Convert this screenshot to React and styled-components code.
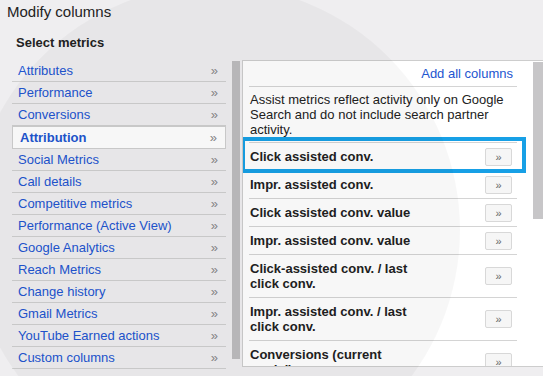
import React from "react";
import styled, { createGlobalStyle } from "styled-components";

const categories = [
  "Attributes",
  "Performance",
  "Conversions",
  "Attribution",
  "Social Metrics",
  "Call details",
  "Competitive metrics",
  "Performance (Active View)",
  "Google Analytics",
  "Reach Metrics",
  "Change history",
  "Gmail Metrics",
  "YouTube Earned actions",
  "Custom columns",
];

const metrics = [
  { name: "Click assisted conv.", marked: true },
  { name: "Impr. assisted conv." },
  { name: "Click assisted conv. value" },
  { name: "Impr. assisted conv. value" },
  { name: "Click-assisted conv. / last click conv." },
  { name: "Impr. assisted conv. / last click conv." },
  { name: "Conversions (current model)" },
];

const App = () => {
  return (
    <Page>
      <GlobalStyle />
      <Title>Modify columns</Title>
      <Subtitle>Select metrics</Subtitle>
      <Columns>
        <List>
          {categories.map((c) => (
            <Item key={c} active={c === "Attribution"}>
              <span>{c}</span>
              <Chevron>»</Chevron>
            </Item>
          ))}
        </List>
        <LeftScroll />
        <Panel>
          <PanelBody>
            <AddRow>
              <AddLink>Add all columns</AddLink>
            </AddRow>
            <Note>
              Assist metrics reflect activity only on Google Search and do not
              include search partner activity.
            </Note>
            {metrics.map((m) => (
              <Metric key={m.name}>
                <MetricName>{m.name}</MetricName>
                <AddButton>»</AddButton>
                {m.marked && <Highlight />}
              </Metric>
            ))}
          </PanelBody>
          <RightTrack>
            <RightThumb />
          </RightTrack>
        </Panel>
      </Columns>
      <Watermark width="543" height="376" viewBox="0 0 543 376">
        <circle cx="215" cy="230" r="245" fill="#000" opacity="0.03" />
      </Watermark>
    </Page>
  );
};

export default App;

const GlobalStyle = createGlobalStyle`
  html, body {
    margin: 0;
    padding: 0;
    background: #efeef0;
    overflow: hidden;
  }
  body {
    font-family: "Liberation Sans", Arial, sans-serif;
  }
`;

const Page = styled.div`
  position: relative;
  width: 543px;
  height: 376px;
  overflow: hidden;
  padding-top: 3px;
  box-sizing: border-box;
  color: #222;
`;

const Title = styled.div`
  font-size: 15px;
  line-height: 18px;
  padding-left: 7px;
`;

const Subtitle = styled.div`
  margin-top: 14px;
  padding-left: 16px;
  font-size: 13px;
  font-weight: bold;
  line-height: 16px;
`;

const Columns = styled.div`
  display: flex;
  align-items: flex-start;
  margin-top: 9px;
`;

const List = styled.div`
  width: 214px;
  margin-left: 12px;
  display: flex;
  flex-direction: column;
`;

const Item = styled.div`
  display: flex;
  align-items: center;
  justify-content: space-between;
  height: 21px;
  padding: 0 8px 0 ${(p) => (p.active ? "7px" : "6px")};
  font-size: 13px;
  color: #2255d0;
  border-bottom: 1px solid #cfcfcf;
  font-weight: ${(p) => (p.active ? "bold" : "normal")};
  background: ${(p) => (p.active ? "#fff" : "transparent")};
  border-top: ${(p) => (p.active ? "1px solid #cfcfcf" : "none")};
  border-left: ${(p) => (p.active ? "1px solid #cfcfcf" : "none")};
  border-right: ${(p) => (p.active ? "1px solid #cfcfcf" : "none")};
`;

const Chevron = styled.span`
  color: #888;
  font-size: 13px;
  font-weight: normal;
`;

const LeftScroll = styled.div`
  width: 8px;
  height: 298px;
  margin: 1px 0 0 6px;
  background: #bdbcbe;
`;

const Panel = styled.div`
  flex: 1;
  display: flex;
  height: 307px;
  margin-left: 2px;
  background: #fff;
  border: 1px solid #cdcdcd;
  border-right: none;
  box-sizing: border-box;
  overflow: hidden;
`;

const PanelBody = styled.div`
  width: 268px;
  margin-left: 6px;
  display: flex;
  flex-direction: column;
`;

const AddRow = styled.div`
  display: flex;
  justify-content: flex-end;
  padding: 5px 4px 4px 0;
  border-bottom: 1px solid #d4d4d4;
`;

const AddLink = styled.span`
  font-size: 13px;
  line-height: 16px;
  color: #2255d0;
`;

const Note = styled.div`
  font-size: 13px;
  line-height: 15px;
  padding: 5px 0 5px 1px;
  border-bottom: 1px solid #d4d4d4;
`;

const Metric = styled.div`
  position: relative;
  display: flex;
  align-items: center;
  justify-content: space-between;
  padding: 0 5px 0 1px;
  border-bottom: 1px solid #d4d4d4;
  flex-shrink: 0;
`;

const MetricName = styled.div`
  max-width: 168px;
  padding: 6px 0;
  font-size: 13px;
  line-height: 15px;
  font-weight: bold;
  color: #222;
`;

const AddButton = styled.div`
  width: 27px;
  height: 18px;
  box-sizing: border-box;
  display: flex;
  align-items: center;
  justify-content: center;
  border: 1px solid #d8d8d8;
  border-radius: 2px;
  background: #f6f6f6;
  color: #666;
  font-size: 11px;
`;

const Highlight = styled.div`
  position: absolute;
  left: -8px;
  right: -9px;
  top: -6px;
  bottom: -3px;
  border: 4px solid #17a0e6;
`;

const RightTrack = styled.div`
  margin-left: auto;
  width: 10px;
  padding-top: 1px;
`;

const RightThumb = styled.div`
  height: 157px;
  background: #c7c6c8;
`;

const Watermark = styled.svg`
  position: absolute;
  left: 0;
  top: 0;
  pointer-events: none;
`;
